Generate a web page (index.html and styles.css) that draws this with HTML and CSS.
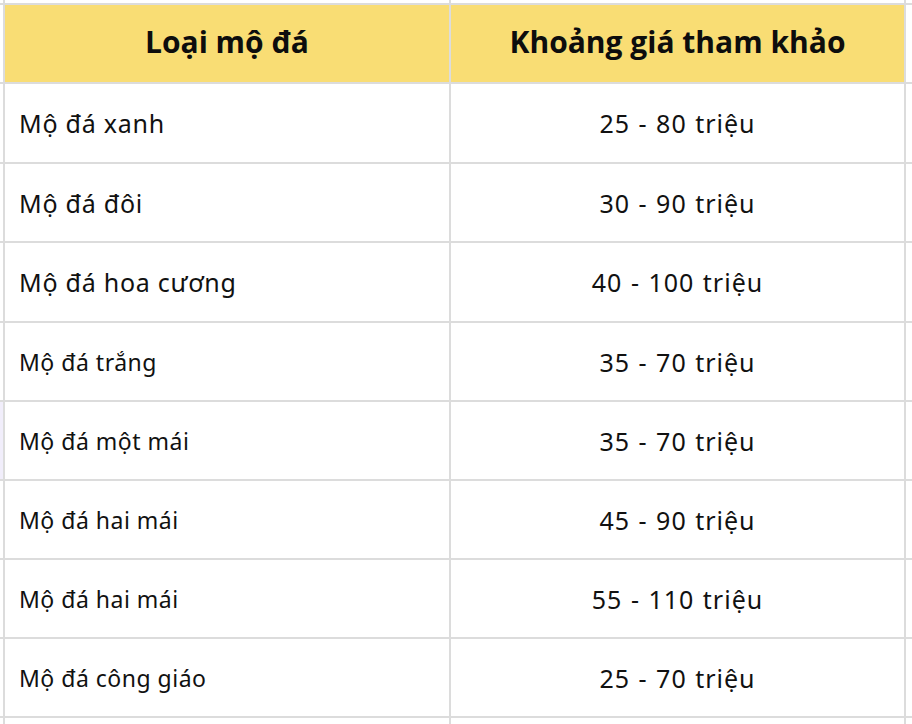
FILE: index.html
```html
<!DOCTYPE html>
<html lang="vi">
<head>
<meta charset="utf-8">
<title>Bảng giá mộ đá</title>
<link rel="stylesheet" href="styles.css">
</head>
<body>
<div class="sheet">
  <div class="edge"></div><div class="edge"></div><div class="edge"></div><div class="edge"></div>

  <div class="edge"></div>
  <div class="cell head">Loại mộ đá</div>
  <div class="cell head">Khoảng giá tham khảo</div>
  <div class="edge"></div>

  <div class="edge"></div><div class="cell name big">Mộ đá xanh</div><div class="cell price">25 - 80 triệu</div><div class="edge"></div>
  <div class="edge"></div><div class="cell name big">Mộ đá đôi</div><div class="cell price">30 - 90 triệu</div><div class="edge"></div>
  <div class="edge"></div><div class="cell name big">Mộ đá hoa cương</div><div class="cell price">40 - 100 triệu</div><div class="edge"></div>
  <div class="edge"></div><div class="cell name">Mộ đá trắng</div><div class="cell price">35 - 70 triệu</div><div class="edge"></div>
  <div class="edge tint"></div><div class="cell name">Mộ đá một mái</div><div class="cell price">35 - 70 triệu</div><div class="edge"></div>
  <div class="edge"></div><div class="cell name">Mộ đá hai mái</div><div class="cell price">45 - 90 triệu</div><div class="edge"></div>
  <div class="edge"></div><div class="cell name">Mộ đá hai mái</div><div class="cell price">55 - 110 triệu</div><div class="edge"></div>
  <div class="edge"></div><div class="cell name">Mộ đá công giáo</div><div class="cell price">25 - 70 triệu</div><div class="edge"></div>

  <div class="edge"></div><div class="edge"></div><div class="edge"></div><div class="edge"></div>
</div>
</body>
</html>
```

FILE: styles.css
```css
html, body {
  margin: 0;
  padding: 0;
  background: #ffffff;
}

body {
  width: 912px;
  height: 724px;
  overflow: hidden;
}

.sheet {
  display: grid;
  grid-template-columns: 3px 444px 453px 6px;
  grid-template-rows: 3px 77px 78px 77px 78px 77px 77px 77px 77px 77px 10px;
  gap: 2px;
  background: #dcdcdc;
  font-family: "Noto Sans", "Open Sans", sans-serif;
  color: #111111;
}

.edge {
  background: #ffffff;
}

.edge.tint {
  background: #f1eefb;
}

.cell {
  background: #ffffff;
  display: flex;
  align-items: center;
}

.head {
  background: #f9dd74;
  justify-content: center;
  font-family: "Open Sans", "Noto Sans", sans-serif;
  font-weight: 700;
  font-size: 30px;
  color: #0d0d0d;
  padding-bottom: 4px;
}

.name {
  padding-left: 14px;
  font-size: 23px;
  letter-spacing: 0.5px;
}

.name.big {
  font-size: 25px;
  letter-spacing: 0.75px;
}

.price {
  justify-content: center;
  font-size: 25px;
  letter-spacing: 1px;
  word-spacing: 1px;
}
```
